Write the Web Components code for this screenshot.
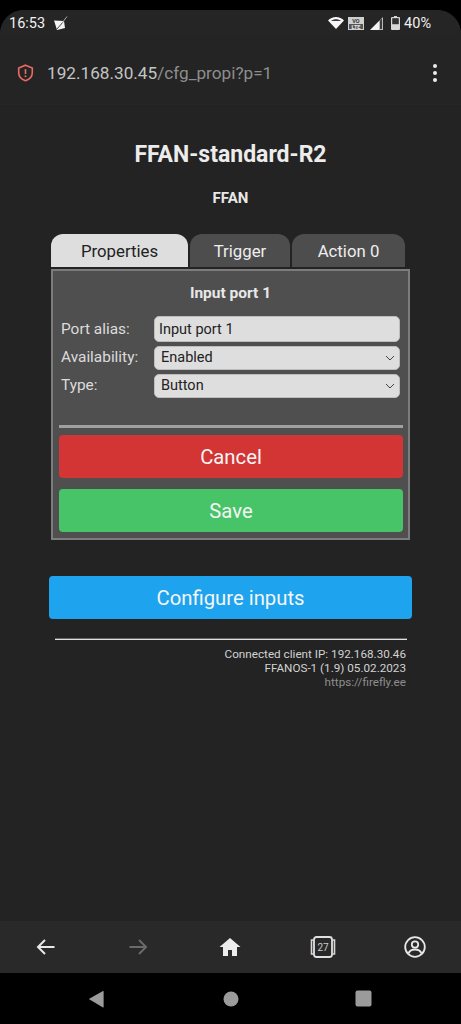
<!DOCTYPE html>
<html><head><meta charset="utf-8">
<style>
html,body{margin:0;padding:0;background:#000;}
body{width:461px;height:1024px;overflow:hidden;font-family:Roboto,"Liberation Sans",sans-serif;}
</style></head><body>
<app-screen>
  <status-bar slot="top"></status-bar>
  <url-bar slot="top"></url-bar>
  <page-content>
    <port-form></port-form>
    <action-button color="#1ea4ee" style="margin:36px 0 0 -3px;width:363px;height:43px;border-radius:4px">Configure inputs</action-button>
    <page-footer></page-footer>
  </page-content>
  <bottom-bar slot="bottom"></bottom-bar>
</app-screen>
<script>
function def(name, html, init){
  customElements.define(name, class extends HTMLElement{
    constructor(){super();this.attachShadow({mode:'open'}).innerHTML=html;}
    connectedCallback(){ if(init) init(this); }
  });
}
def('app-screen',`<style>
:host{display:flex;flex-direction:column;height:1024px;box-sizing:border-box;padding-top:10px;background:#000;color:#eee}
.app{flex:1;display:flex;flex-direction:column;background:#232323;border-radius:24px 24px 0 0;overflow:hidden;min-height:0}
.main{flex:1;min-height:0}
</style><div class="app"><slot name="top"></slot><div class="main"><slot></slot></div><slot name="bottom"></slot></div><nav-keys></nav-keys>`);

def('status-bar',`<style>
:host{display:flex;align-items:center;height:24px;box-sizing:border-box;padding:2px 30px 0 9px;font-size:14.500px;color:#f1f1f1;background:#252525}
.r{margin-left:auto;display:flex;align-items:center}
svg{display:block}
</style>
<span>16:53</span>
<svg style="margin-left:9px;margin-top:-1px" width="14" height="14" viewBox="0 0 14 14"><path fill="#f4f4f4" d="M0 4.500 10 5l1 7-8 2z"/><path stroke="#444" stroke-width="1" fill="none" d="M3 13 9.500 5.500"/><path stroke="#aaa" stroke-width="1" fill="none" d="M8 7 13 .5"/></svg>
<div class="r">
<svg width="16" height="12" viewBox="0 0 16 12"><path fill="#f6f6f6" d="M8 12 0 3.600C2 1.400 4.800 0 8 0s6 1.400 8 3.600z"/><path fill="#3a3a3a" d="M8 2.200c-2 0-3.700.6-5 1.700h10c-1.300-1.100-3-1.700-5-1.700z"/></svg>
<svg style="margin-left:4px" width="16" height="13" viewBox="0 0 16 13"><rect width="16" height="13" fill="#cfcfcf"/><rect x="1" y="7" width="14" height="5" fill="#555"/><text x="8" y="5.600" font-size="5.500" font-weight="700" text-anchor="middle" fill="#333" font-family="Roboto">VO</text><text x="8" y="11.500" font-size="5.500" font-weight="700" text-anchor="middle" fill="#e8e8e8" font-family="Roboto">LTE</text></svg>
<svg style="margin-left:6px" width="13" height="13" viewBox="0 0 13 13"><path fill="#f4f4f4" d="M0 13 9 4v9z"/><path fill="#bbb" d="M9 4l4-4v13H9z"/><path fill="#3b3b3b" d="M10 3.500l2-2V12h-2z"/></svg>
<svg style="margin-left:8px" width="9" height="14" viewBox="0 0 9 14"><path fill="#d8d8d8" d="M3 0h3v1h2a1 1 0 0 1 1 1v11a1 1 0 0 1-1 1H1a1 1 0 0 1-1-1V2a1 1 0 0 1 1-1h2z"/><rect x="1.200" y="2.200" width="6.600" height="6" fill="#333"/></svg>
<span style="margin-left:4px">40%</span>
</div>`);

def('url-bar',`<style>
:host{display:flex;align-items:center;height:71px;padding:8px 24px 0 17px;font-size:17.200px;color:#8e8e8e;background:#242424;box-sizing:border-box;border-bottom:1px solid #262626}
b{font-weight:400;color:#c4c4c4}
svg{display:block}
.t{margin-left:13px}
.m{margin-left:auto;display:flex;flex-direction:column;gap:3px}
.m i{display:block;width:4px;height:4px;border-radius:50%;background:#ececec}
</style>
<svg width="17" height="18" viewBox="0 0 17 18"><path fill="none" stroke="#ec6a66" stroke-width="1.600" d="M8.500 1.200 15.300 4v4.500c0 4-2.800 7-6.800 8.300-4-1.300-6.800-4.300-6.800-8.300V4z"/><path stroke="#ec6a66" stroke-width="1.600" d="M8.500 5v5"/><circle cx="8.500" cy="12.300" r="1" fill="#ec6a66"/></svg>
<span class="t"><b>192.168.30.45</b>/cfg_propi?p=1</span>
<div class="m"><i></i><i></i><i></i></div>`);

def('page-content',`<style>
:host{display:flex;flex-direction:column;padding:0 0 0 52px;color:#eee;}
h1{margin:37px 0 0 -52px;font-size:23px;line-height:26px;font-weight:700;text-align:center;color:#ececec}
h2{margin:21px 0 0 -52px;font-size:15px;line-height:18px;font-weight:700;text-align:center;color:#e8e8e8}
</style><h1>FFAN-standard-R2</h1><h2>FFAN</h2><slot></slot>`);

def('tab-item',`<style>
:host{display:flex;align-items:center;justify-content:center;height:33px;box-sizing:border-box;border-radius:12px 12px 0 0;background:#4d4d4d;color:#eee;font-size:16.800px}
:host([active]){background:#dedede;color:#222}
</style><slot></slot>`);

def('form-row',`<style>
:host{display:flex;align-items:center;font-size:15.400px;color:#dcdcdc}
.l{width:93px;flex:none}
:host([tight]) .l{padding-bottom:2px}
</style><span class="l"><slot name="label"></slot></span><slot></slot>`);

def('text-field',`<style>
:host{display:flex;align-items:center;box-sizing:border-box;width:246px;height:26px;padding:0 4px;background:#dedede;border:1px solid #bdbdbd;border-radius:5px;color:#222;font-size:14.500px}
</style><slot></slot>`);

def('select-field',`<style>
:host{display:flex;align-items:center;justify-content:space-between;box-sizing:border-box;width:246px;height:24px;padding:0 4px 1px 6px;background:#dedede;border:1px solid #bdbdbd;border-radius:5px;color:#222;font-size:14.500px}
svg{display:block;margin-top:1px}
</style><slot></slot><svg width="10" height="6" viewBox="0 0 10 6"><path d="M1 1l4 4 4-4" fill="none" stroke="#444" stroke-width="1"/></svg>`);

def('action-button',`<style>
:host{display:flex;align-items:center;justify-content:center;box-sizing:border-box;height:43px;border-radius:4px;color:#f5f5f5;font-size:20.300px}
</style><slot></slot>`,el=>{el.style.background=el.getAttribute('color')});

def('port-form',`<style>
:host{display:block;margin-top:27px;margin-left:-1px}
.tabs{display:grid;grid-template-columns:137px 100px 113px;gap:2px}
.panel{margin-top:2px;width:359px;height:271px;box-sizing:border-box;background:#4f4f4f;border:2px solid #7c7c7c;padding:0 6px;display:flex;flex-direction:column}
.title{margin-top:14px;text-align:center;font-size:15.500px;line-height:17px;font-weight:700;color:#e8e8e8}
.rows{margin:14px 0 0 2px;display:flex;flex-direction:column;gap:4px}
hr{margin:27px 0 0;border:0;height:3px;background:#a0a0a0;width:344px}
.btns{margin-top:7px;display:flex;flex-direction:column;gap:11px;width:344px}
</style>
<div class="tabs"><tab-item active>Properties</tab-item><tab-item>Trigger</tab-item><tab-item>Action 0</tab-item></div>
<div class="panel">
<div class="title">Input port 1</div>
<div class="rows">
<form-row><span slot="label">Port alias:</span><text-field>Input port 1</text-field></form-row>
<form-row tight><span slot="label">Availability:</span><select-field>Enabled</select-field></form-row>
<form-row tight><span slot="label">Type:</span><select-field>Button</select-field></form-row>
</div>
<hr>
<div class="btns"><action-button color="#d33535">Cancel</action-button><action-button color="#48c468">Save</action-button></div>
</div>`);

def('page-footer',`<style>
:host{display:block;margin:19px 0 0 3px;width:352px;text-align:right;font-size:11.700px;line-height:14px;color:#d2d2d2;border-top:1px solid #666;padding-top:7px;box-sizing:border-box}
.line{height:1px;background:#e0e0e0;margin:-7px 0 7px}
.in{padding-right:1px}
.m{color:#8e8e8e}
</style><div class="line"></div><div class="in"><div>Connected client IP: 192.168.30.46</div><div>FFANOS-1 (1.9) 05.02.2023</div><div class="m">https://firefly.ee</div></div>`);

def('bottom-bar',`<style>
:host{display:grid;grid-template-columns:repeat(5,92.200px);height:52px;background:#292929;border-top:1px solid #2b2b2b;box-sizing:border-box;align-items:center;justify-items:center}
svg{display:block;margin-top:-2px}
</style>
<svg width="20" height="18" viewBox="0 0 20 18"><path d="M18.500 9H2M9 2 2 9l7 7" fill="none" stroke="#e8e8e8" stroke-width="2"/></svg>
<svg width="20" height="18" viewBox="0 0 20 18"><path d="M1.500 9H18M11 2l7 7-7 7" fill="none" stroke="#6a6a6a" stroke-width="2"/></svg>
<svg width="22" height="20" viewBox="0 0 22 20"><path fill="#ededed" d="M11 1 .5 10H4v9h5v-6h4v6h5v-9h3.500z"/></svg>
<svg width="26" height="22" viewBox="0 0 26 22"><rect x="4" y="1" width="18" height="20" rx="2.500" fill="none" stroke="#e0e0e0" stroke-width="1.800"/><path d="M4 4H1.500v14H4M22 4h2.500v14H22" fill="none" stroke="#d8d8d8" stroke-width="1.600"/><text x="13" y="14.800" font-size="10" text-anchor="middle" fill="#ccc" font-family="Roboto">27</text></svg>
<svg width="22" height="22" viewBox="0 0 22 22"><circle cx="11" cy="11" r="9.800" fill="none" stroke="#e8e8e8" stroke-width="1.800"/><circle cx="11" cy="8.500" r="3.200" fill="none" stroke="#e8e8e8" stroke-width="1.800"/><path d="M4.500 17.500c1-3 3.500-4 6.500-4s5.500 1 6.500 4" fill="none" stroke="#e8e8e8" stroke-width="1.800"/></svg>`);

def('nav-keys',`<style>
:host{display:flex;height:51px;flex:none;background:#000;align-items:center}
.w{display:grid;grid-template-columns:133px 133px 133px;margin-left:31px;align-items:center;justify-items:center;width:399px}
svg{display:block}
</style><div class="w">
<svg style="margin-right:4px" width="16" height="18" viewBox="0 0 16 18"><path fill="#9b9b9b" d="M15 1 .8 9 15 17.500c.4 0 .6-.2.6-.6V1.500c0-.4-.2-.6-.6-.5z"/></svg>
<svg width="16" height="16" viewBox="0 0 16 16"><circle cx="8" cy="8" r="7.500" fill="#9b9b9b"/></svg>
<svg width="17" height="17" viewBox="0 0 17 17"><rect x=".5" y=".5" width="16" height="16" rx="2" fill="#9b9b9b"/></svg>
</div>`);
</script>
</body></html>
